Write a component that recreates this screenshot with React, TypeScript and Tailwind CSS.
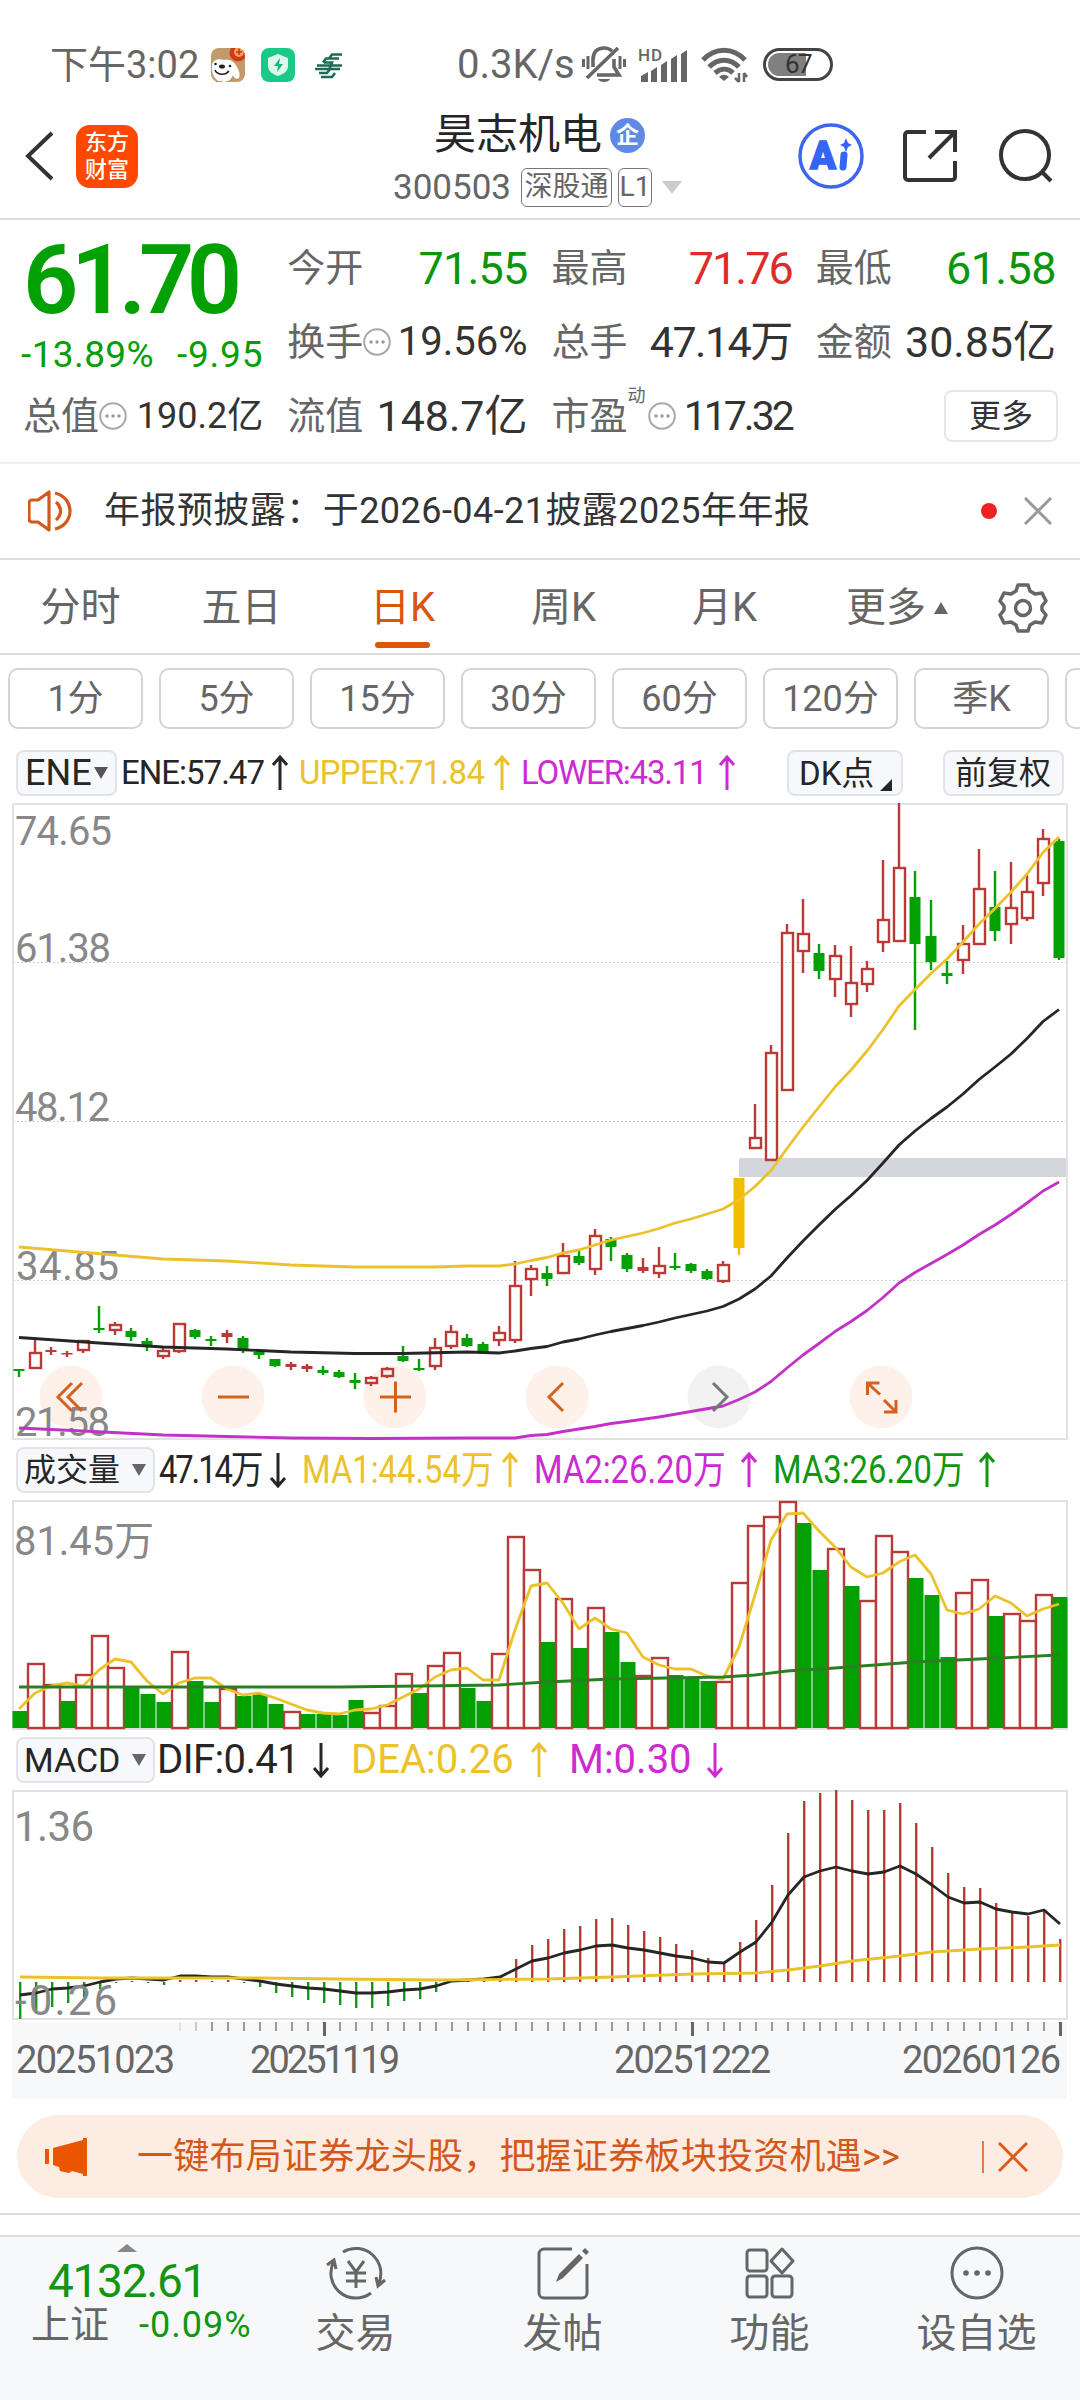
const RED = '#b93a36';
const GREEN = '#03a003';
const YELLOW = '#ecc22c';
const PURPLE = '#c232c8';
const BLACK = '#262626';

// [kind, high, bodyTop, bodyBottom, low] in chart pixels
const candles: [string, number, number, number, number][] = [
  ['g', 566, 566, 568, 574], ['r', 536, 550, 565, 566], ['r', 544, 547, 549, 552], ['r', 548, 550, 551, 554],
  ['r', 537, 538, 547, 550], ['g', 503, 525, 527, 530], ['r', 519, 522, 527, 532], ['g', 525, 528, 534, 538],
  ['g', 535, 538, 543, 548], ['r', 545, 548, 553, 556], ['r', 521, 521, 548, 550], ['g', 526, 527, 534, 536],
  ['g', 533, 536, 538, 543], ['r', 527, 530, 534, 540], ['g', 533, 535, 546, 550], ['g', 547, 549, 552, 556],
  ['g', 556, 556, 563, 564], ['r', 559, 561, 564, 567], ['r', 561, 563, 566, 569], ['g', 563, 567, 570, 572],
  ['g', 567, 569, 574, 575], ['g', 570, 577, 580, 586], ['r', 573, 575, 580, 583], ['r', 564, 566, 573, 575],
  ['g', 543, 553, 558, 559], ['g', 556, 565, 567, 568], ['r', 535, 545, 563, 567], ['r', 522, 529, 543, 546],
  ['g', 531, 535, 543, 544], ['g', 539, 541, 549, 550], ['r', 523, 530, 537, 543], ['r', 458, 483, 537, 540],
  ['r', 462, 466, 476, 493], ['g', 463, 470, 476, 483], ['r', 440, 453, 470, 470], ['g', 448, 453, 460, 462],
  ['r', 426, 433, 466, 472], ['g', 434, 436, 444, 458], ['g', 450, 452, 466, 469], ['r', 455, 464, 468, 470],
  ['r', 444, 463, 470, 475], ['g', 450, 463, 465, 467], ['g', 460, 461, 468, 470], ['g', 466, 468, 476, 477],
  ['r', 458, 462, 478, 480], ['y', 375, 375, 445, 452], ['r', 301, 335, 345, 346], ['r', 242, 250, 357, 357],
  ['r', 121, 130, 287, 287], ['r', 96, 131, 148, 170], ['g', 141, 150, 168, 176], ['r', 142, 153, 176, 194],
  ['r', 143, 180, 201, 214], ['r', 158, 166, 181, 189], ['r', 57, 117, 139, 149], ['r', 0, 65, 138, 138],
  ['g', 68, 94, 141, 227], ['g', 97, 133, 159, 167], ['g', 158, 170, 173, 181], ['r', 122, 141, 157, 171],
  ['r', 46, 86, 141, 141], ['g', 68, 104, 128, 138], ['r', 59, 105, 121, 141], ['r', 72, 89, 115, 118],
  ['r', 26, 36, 80, 93], ['g', 36, 38, 155, 157],
];

// [index, y]
const upper: number[][] = [
  [0, 444], [3, 448], [6, 452], [9, 456], [13, 458], [17, 462], [21, 464], [26, 464], [28, 463], [30, 463], [31, 461],
  [32, 457.5], [33, 454.5], [34, 450], [35, 447], [36, 442], [37, 437], [38, 433.5], [39, 430], [40, 425.5], [41, 420],
  [42, 416], [43, 411], [44, 406], [45, 396.5], [46, 383.5], [47, 367.5], [48, 345.5], [49, 324], [50, 304], [51, 284],
  [52, 267], [53, 248], [54, 226.5], [55, 203], [56, 186.5], [57, 170.5], [58, 156], [59, 139], [60, 121], [61, 105.5],
  [62, 89], [63, 71], [64, 49.5], [65, 34],
];
const middle: number[][] = [
  [0, 534.5], [5, 540], [9, 544], [13, 546], [17, 549], [21, 550.5], [24, 550.5], [28, 549], [30, 550], [31, 548],
  [32, 545.5], [33, 543.5], [34, 539], [35, 536], [36, 532], [37, 528.5], [38, 525.5], [39, 522.5], [40, 519], [41, 515],
  [42, 511.5], [43, 508], [44, 503.5], [45, 496], [46, 486], [47, 473], [48, 455], [49, 438], [50, 422], [51, 406.5],
  [52, 392.5], [53, 377.5], [54, 360], [55, 342], [56, 328], [57, 315.5], [58, 304], [59, 291], [60, 276.5], [61, 264],
  [62, 251], [63, 235.5], [64, 218.5], [65, 206.5],
];
const lower: number[][] = [
  [0, 625], [4, 628], [9, 632], [13, 633.5], [17, 635], [22, 635.5], [28, 635], [31, 635], [32, 632.5], [33, 631.5],
  [34, 628.5], [35, 626], [36, 623.5], [37, 620.5], [38, 618.5], [40, 614], [42, 608.5], [44, 603], [45, 596.5],
  [46, 589], [47, 578.5], [48, 565], [49, 552], [50, 540.5], [51, 528.5], [52, 518.5], [53, 507.5], [54, 494.5],
  [55, 480], [56, 469.5], [57, 460.5], [58, 451.5], [59, 442], [60, 431.5], [61, 422], [62, 411.5], [63, 400], [64, 388],
  [65, 379],
];

const volumes: [string, number][] = [
  ['g', 211], ['r', 163], ['r', 184], ['g', 201], ['r', 174], ['r', 135], ['r', 167], ['g', 186], ['g', 194], ['g', 202],
  ['r', 151], ['g', 181], ['g', 202], ['r', 188], ['g', 196], ['g', 194], ['g', 204], ['r', 211], ['g', 214], ['g', 214],
  ['g', 215], ['g', 200], ['r', 212], ['r', 205], ['r', 173], ['g', 193], ['r', 165], ['r', 152], ['g', 188], ['g', 201],
  ['r', 153], ['r', 36], ['r', 69], ['g', 142], ['r', 98], ['g', 148], ['r', 107], ['g', 132], ['g', 162], ['r', 175],
  ['r', 157], ['g', 175], ['g', 177], ['g', 181], ['r', 181], ['r', 82], ['r', 25], ['r', 16], ['r', 1], ['g', 23],
  ['g', 70], ['r', 48], ['g', 86], ['r', 100], ['r', 35], ['r', 51], ['g', 78], ['g', 95], ['g', 157], ['r', 92],
  ['r', 79], ['g', 116], ['r', 113], ['r', 120], ['r', 94], ['g', 97],
];
const volMa1 = [
  209, 193, 186, 183, 186, 170, 159, 162, 181, 194, 183, 178, 178, 189, 195, 193, 198, 204, 210, 213, 214, 210, 209, 205,
  197, 189, 177, 170, 168, 180, 180, 130, 86, 83, 103, 129, 118, 129, 133, 157, 165, 169, 169, 176, 179, 147, 95, 40, 14,
  13, 31, 47, 67, 77, 73, 62, 55, 74, 110, 114, 109, 96, 103, 116, 109, 104,
];
const volMa3: number[][] = [
  [0, 187], [20, 187], [25, 186], [30, 185], [33, 182], [37, 179], [44, 177], [46, 175], [48, 171], [51, 168], [56, 162],
  [60, 159], [65, 155],
];

const macd = [
  229, 223, 217, 213, 207, 199, 193, 191, 193, 195, 190, 190, 191, 190, 193, 197, 203, 207, 210, 213, 215, 218, 218, 216,
  211, 209, 202, 192, 190, 190, 186, 169, 155, 149, 139, 136, 129, 128, 135, 141, 147, 154, 160, 168, 172, 152, 130, 95,
  43, 11, 3, 0, 10, 20, 20, 13, 33, 57, 83, 97, 98, 113, 121, 126, 121, 149,
];
const dif = [
  205, 203, 199, 198, 196, 192, 189, 188, 189, 190, 186, 186, 187, 187, 189, 191, 194, 196, 198, 199, 201, 203, 203, 202,
  200, 199, 196, 191, 190, 189, 187, 179, 171, 168, 163, 160, 156, 155, 158, 160, 163, 166, 168, 172, 173, 162, 152, 132,
  105, 87, 81, 77, 81, 84, 82, 76, 84, 95, 107, 113, 112, 119, 122, 124, 120, 134,
];
const dea: number[][] = [
  [0, 187], [5, 188], [15, 188], [20, 189], [26, 190], [33, 189], [37, 187], [42, 184], [46, 183], [48, 180], [50, 176],
  [52, 171], [55, 166], [57, 162], [60, 159], [63, 157], [65, 155],
];

// x inside a chart svg, whose left edge is the frame
const cx = (i: number) => 7 + i * 16;
const line = (pts: number[][], dx = 0) => pts.map(([i, y]) => `${cx(i) + dx},${y}`).join(' ');
const series = (ys: number[]) => ys.map((y, i) => [i, y]);

function Arrow({ down = false }: { down?: boolean }) {
  return (
    <svg width="18" height="36" viewBox="0 0 18 36" fill="none" stroke="currentColor" strokeWidth="3" className="shrink-0">
      {down ? <path d="M9 1v33M2 26l7 8 7-8" /> : <path d="M9 35V2M2 10l7-8 7 8" />}
    </svg>
  );
}

function Dots() {
  return (
    <svg width="28" height="28" viewBox="0 0 28 28" className="shrink-0">
      <circle cx="14" cy="14" r="12.8" fill="none" stroke="#a8a8a8" strokeWidth="2" />
      <circle cx="8" cy="14" r="1.7" fill="#999" />
      <circle cx="14" cy="14" r="1.7" fill="#999" />
      <circle cx="20" cy="14" r="1.7" fill="#999" />
    </svg>
  );
}

function Down({ className }: { className: string }) {
  return (
    <svg width="14" height="12" viewBox="0 0 14 12" className={className}>
      <path d="M0 0h14L7 12z" fill="currentColor" />
    </svg>
  );
}

function StatusBar() {
  return (
    <div className="flex h-[110px] items-center pl-[50px] pt-[19px] text-[#666]">
      <div className="w-[161px] text-[38px] leading-none whitespace-nowrap">下午3:02</div>
      <svg width="34" height="34" viewBox="0 0 34 34" className="shrink-0">
        <clipPath id="dog"><rect width="34" height="34" rx="8" /></clipPath>
        <g clipPath="url(#dog)">
          <rect width="34" height="34" fill="#c39a6b" />
          <circle cx="27" cy="5" r="8.5" fill="#cf3a1c" />
          <circle cx="28" cy="4" r="5" fill="#f0a64e" />
          <path d="M25 4h6M28 1v6" stroke="#c9341a" strokeWidth="1.6" />
          <path d="M1 18c0-6 6-8 12-6 3-1 9 0 11 4 3 4 6 10 4 14-3 2-5 0-6-3-2 5-5 7-11 7C5 34 0 26 1 18z" fill="#fff" />
          <path d="M4 22c2 5 10 6 14 1" stroke="#222" strokeWidth="1.6" fill="none" />
          <ellipse cx="11" cy="18.500" rx="3" ry="2" fill="#222" />
          <circle cx="4.500" cy="16" r="1.300" fill="#222" />
          <circle cx="19" cy="18" r="1.300" fill="#222" />
          <path d="M5 33c2 1 4 1 6 0v3H5z" fill="#cf3a1c" />
        </g>
      </svg>
      <svg width="34" height="34" viewBox="0 0 34 34" className="ml-4 shrink-0">
        <rect width="34" height="34" rx="8" fill="#19ca86" />
        <path d="M17 6l10 4v8c0 5-4 8-10 10-6-2-10-5-10-10v-8z" fill="#dff8ee" />
        <path d="M19 10l-6 8h4l-1 6 6-8h-4z" fill="#14b877" />
      </svg>
      <svg width="34" height="34" viewBox="0 0 34 34" className="ml-4 shrink-0" fill="none" stroke="#1c6b55" strokeWidth="2.600">
        <path d="M31 6.500H21l-3 4h10M26 10.500H15l-3 4M31 17.500H6M4 21h13M29 21H19l-3 4H8M24 25l-3 4H10M13 14.500h8l-3 7" />
      </svg>
      <div className="ml-[112px] w-[125px] text-[40px] leading-none">0.3K/s</div>
      <svg width="44" height="40" viewBox="0 0 44 40" fill="none" stroke="#666" strokeWidth="3.600" className="shrink-0">
        <path d="M11 22V15c0-8 4-12 11-12 4 0 6 1 8 3M32 14v8l5 8H15M5 33L36 3" />
        <path d="M1.500 14v8M6 11v13M38 11v13M42.500 14v8" strokeWidth="3" />
        <path d="M16 34h12c-1 4-11 4-12 0z" fill="#666" stroke="none" />
      </svg>
      <svg width="51" height="40" viewBox="0 0 51 40" className="ml-3 shrink-0" fill="#666">
        <text x="0" y="16" className="text-[17px] font-medium" textLength="24">HD</text>
        <path d="M3 31l7-4v10H3zM13 26l6-4v15h-6zM23 20l6-4v21h-6zM33 14l6-4v27h-6zM43 9l6-4v32h-6z" />
      </svg>
      <svg width="48" height="36" viewBox="0 0 48 36" fill="none" stroke="#666" strokeWidth="5" className="ml-3 shrink-0">
        <path d="M2 13C14 0 32 0 44 13M8 20c9-9 21-9 30 0M14 26c6-5 13-5 18 0" />
        <path d="M18 30c3-3 7-3 10 0l-5 4z" fill="#666" stroke="none" />
        <path d="M38 26v9M43 35v-9M38 35l-4-4M43 26l3 4" strokeWidth="2.500" />
      </svg>
      <div className="relative ml-3.5 h-[33px] w-[70px] rounded-full border-[3px] border-[#444] p-0.5">
        <div className="h-full w-[38px] rounded-l-full bg-[#808080]" />
        <div className="absolute inset-0 text-center text-[26px] leading-[27px] tracking-[-1.5px] text-[#333]">67</div>
      </div>
    </div>
  );
}

function Header() {
  return (
    <div className="flex h-[110px] items-center border-b-2 border-[#ddd] pb-4">
      <svg width="30" height="52" viewBox="0 0 30 52" fill="none" stroke="#333" strokeWidth="4" className="ml-6 shrink-0">
        <path d="M28 3L4 26l24 23" />
      </svg>
      <div className="ml-[22px] flex h-[63px] w-[62px] flex-col items-center justify-center rounded-[14px] bg-[#ff4800] text-[22px] leading-[27px] font-medium text-white">
        <div>东方</div>
        <div>财富</div>
      </div>
      <div className="mt-2 ml-[255px] w-[300px] shrink-0">
        <div className="flex h-[50px] items-center pl-[41px]">
          <span className="text-[42px] leading-none text-[#262626]">昊志机电</span>
          <span className="ml-2 flex h-[35px] w-[35px] items-center justify-center rounded-full bg-[#5e8ae6] text-[23px] leading-none font-bold text-white">企</span>
        </div>
        <div className="mt-1 flex h-[46px] items-center text-[#666]">
          <span className="w-[128px] text-[35px] leading-none">300503</span>
          <span className="flex h-[39px] w-[91px] items-center justify-center rounded-md border border-[#777] text-[28px] leading-none">深股通</span>
          <span className="ml-1.5 flex h-[39px] w-[34px] items-center justify-center rounded-md border border-[#777] text-[28px] leading-none">L1</span>
          <svg width="20" height="13" viewBox="0 0 20 13" className="ml-2.5"><path d="M0 0h20L10 13z" fill="#ccc" /></svg>
        </div>
      </div>
      <svg width="66" height="66" viewBox="0 0 66 66" className="ml-[105px] shrink-0">
        <circle cx="33" cy="33" r="31" fill="none" stroke="#3c66ee" strokeWidth="3.500" />
        <text x="12" y="46" fill="#3565f5" stroke="#3565f5" strokeWidth="1.500" className="text-[38px] font-black">A</text>
        <path d="M46 32l-1 12" stroke="#3565f5" strokeWidth="7" strokeLinecap="round" />
        <path d="M48 15l2 5 4 2-4 2-2 5-2-5-4-2 4-2z" fill="#3565f5" />
      </svg>
      <svg width="54" height="54" viewBox="0 0 54 54" fill="none" stroke="#333" strokeWidth="4" className="ml-[39px] shrink-0">
        <path d="M23 3H5a3 3 0 0 0-3 3v42a3 3 0 0 0 3 3h44a3 3 0 0 0 3-3V32M32 3h20v20M51 4L26 29" />
      </svg>
      <svg width="56" height="56" viewBox="0 0 56 56" fill="none" stroke="#333" strokeWidth="4" className="ml-[41px] shrink-0">
        <circle cx="27" cy="27" r="24" />
        <path d="M43 43l10 10" />
      </svg>
    </div>
  );
}

function Quote() {
  const cell = 'flex items-center justify-between whitespace-nowrap leading-none text-[#333]';
  const label = 'text-[38px] text-[#666]';
  return (
    <div className="grid h-[244px] grid-cols-4 grid-rows-[74px_74px_74px] gap-x-6 border-b-2 border-[#eee] pr-6 pl-[23px] pt-[11px]">
      <div className="row-span-2 text-[#03a003]">
        <div className="h-[86px] text-[97px] leading-[98px] font-semibold tracking-[-7.5px]">61.70</div>
        <div className="mt-[18px] -ml-0.5 flex justify-between text-[37px] leading-[40px] tracking-[0.4px]">
          <span>-13.89%</span>
          <span className="tracking-[0.8px]">-9.95</span>
        </div>
      </div>
      <div className={cell}><span className={label}>今开</span><span className="text-[45px] tracking-[-0.8px] text-[#0a960a]">71.55</span></div>
      <div className={cell}><span className={label}>最高</span><span className="text-[45px] tracking-[-2px] text-[#dd2c2c]">71.76</span></div>
      <div className={cell}><span className={label}>最低</span><span className="text-[45px] tracking-[-0.6px] text-[#0a960a]">61.58</span></div>
      <div className={cell}><span className="flex items-center"><span className={label}>换手</span><Dots /></span><span className="text-[40px]">19.56%</span></div>
      <div className={cell}><span className={label}>总手</span><span className="text-[43px] tracking-[-1.5px]">47.14万</span></div>
      <div className={cell}><span className={label}>金额</span><span className="text-[43px]">30.85亿</span></div>
      <div className={cell}><span className="flex items-center"><span className={label}>总值</span><Dots /></span><span className="text-[36px]">190.2亿</span></div>
      <div className={cell}><span className={label}>流值</span><span className="text-[43px]">148.7亿</span></div>
      <div className={cell}>
        <span className="flex items-center">
          <span className={label}>市盈</span>
          <span className="mb-10 w-5 text-[18px] text-[#666]">动</span>
          <Dots />
        </span>
        <span className="text-[41px] tracking-[-3px]">117.32</span>
      </div>
      <div className="flex items-center justify-end">
        <div className="-mr-0.5 flex h-[52px] w-[114px] items-center justify-center rounded-lg border-2 border-[#e6e6e6] text-[32px] leading-none text-[#333]">更多</div>
      </div>
    </div>
  );
}

function Notice() {
  return (
    <div className="flex h-24 items-center border-b-2 border-[#ddd] pl-7 leading-none">
      <svg width="48" height="42" viewBox="0 0 48 42" fill="none" stroke="#d4581a" strokeWidth="3.200" className="shrink-0">
        <path d="M21 2v38L10 32H4a3 3 0 0 1-3-3V13a3 3 0 0 1 3-3h6z" strokeLinejoin="round" />
        <path d="M28 12c6 5 6 13 0 18M27 3c20 5 20 31 0 36" />
      </svg>
      <div className="ml-7 w-[877px] text-[36px] tracking-[0.45px] whitespace-nowrap text-[#333]">年报预披露：于2026-04-21披露2025年年报</div>
      <div className="h-4 w-4 shrink-0 rounded-full bg-[#ee2222]" />
      <svg width="28" height="28" viewBox="0 0 28 28" stroke="#999" strokeWidth="3" className="ml-[27px] shrink-0"><path d="M1 1l26 26M27 1L1 27" /></svg>
    </div>
  );
}

function Tabs() {
  return (
    <div className="flex h-[95px] items-center border-b-2 border-[#ddd] pt-0.5 text-[40px] leading-none text-[#666]">
      {['分时', '五日', '日K', '周K', '月K'].map((t) => (
        <div key={t} className={t === '日K' ? 'relative w-[161px] text-center text-[#d9560f]' : 'w-[161px] text-center'}>
          {t}
          {t === '日K' && <div className="absolute -bottom-5 left-[53px] h-1.5 w-[55px] rounded-full bg-[#d9560f]" />}
        </div>
      ))}
      <div className="flex w-[185px] items-center pl-[41px]">
        更多
        <svg width="14" height="12" viewBox="0 0 14 12" className="ml-2"><path d="M0 12h14L7 0z" fill="#666" /></svg>
      </div>
      <svg width="50" height="50" viewBox="0 0 50 50" fill="none" stroke="#666" strokeWidth="3.500" strokeLinejoin="round" className="ml-[8px]">
        <path d="M20 2h10l2 6 5 3 7-1 4 8-4 5v4l4 5-4 8-7-1-5 3-2 6H20l-2-6-5-3-7 1-4-8 4-5v-4l-4-5 4-8 7 1 5-3z" />
        <circle cx="25" cy="25" r="7.500" />
      </svg>
    </div>
  );
}

function Periods() {
  return (
    <div className="flex h-[95px] gap-4 overflow-hidden pt-[13px] pl-2">
      {['1分', '5分', '15分', '30分', '60分', '120分', '季K', ''].map((p) => (
        <div key={p} className="flex h-[61px] w-[135px] shrink-0 items-center justify-center rounded-[10px] border-2 border-[#d4d4d4] text-[36px] leading-none text-[#666]">{p}</div>
      ))}
    </div>
  );
}

function Legend() {
  const box = 'flex h-[46px] shrink-0 items-center rounded-lg border-2 border-[#e0e3e8] bg-[#f7f8fb] leading-none text-[#262626]';
  return (
    <div className="flex h-[53px] items-start pl-4 text-[33px] leading-[46px] whitespace-nowrap">
      <div className={`${box} w-[101px] pl-[7px] text-[36px]`}>ENE<Down className="ml-0.5 text-[#555]" /></div>
      <div className="flex w-[180px] items-center pl-1 tracking-[-1px] text-[#262626]"><span className="w-[150px]">ENE:57.47</span><Arrow /></div>
      <div className="flex w-[222px] items-center pl-0.5 tracking-[-0.7px] text-[#ecc22c]"><span className="w-[194px]">UPPER:71.84</span><Arrow /></div>
      <div className="flex w-[268px] items-center pl-0.5 tracking-[-1.2px] text-[#cc2bd2]"><span className="w-[197px]">LOWER:43.11</span><Arrow /></div>
      <div className={`${box} w-[116px] pl-2.5`}>DK点<svg width="12" height="12" className="mt-6 ml-1.5"><path d="M12 0v12H0z" fill="#262626" /></svg></div>
      <div className={`${box} ml-10 w-[121px] pl-2.5 text-[32px]`}>前复权</div>
    </div>
  );
}

function KLine() {
  return (
    <svg width="1056" height="637" viewBox="0 0 1056 637" className="ml-3 block">
      {[71, 233, 395, 557, 719, 881].map((x) => (
        <circle key={x} cx={x - 12} cy="594" r="31.500" fill={x === 719 ? '#f2f2f2' : '#fef1e9'} />
      ))}
      <rect x="727" y="355" width="328" height="19" fill="#d3d7dc" />
      {[159, 318, 477].map((y) => (
        <path key={y} d={`M1 ${y + 0.5}H1055`} stroke="#cfcfcf" strokeDasharray="2 2" />
      ))}
      <rect x="1" y="1" width="1054" height="635" fill="none" stroke="#e2e2e2" strokeWidth="2" />
      <g className="text-[40px]" fill="#888">
        <text x="3" y="42" textLength="97">74.65</text>
        <text x="3" y="159" textLength="96">61.38</text>
        <text x="3" y="318" textLength="95">48.12</text>
        <text x="4" y="477" textLength="103">34.85</text>
        <text x="3" y="633" textLength="95">21.58</text>
      </g>
      {candles.map(([k, h, t, b, l], i) => {
        const color = k === 'g' ? GREEN : k === 'y' ? '#f5bb00' : RED;
        const hollow = k === 'r' && b - t > 4;
        return (
          <g key={i} stroke={color} strokeWidth="2.400">
            <path d={`M${cx(i)} ${h}V${t}M${cx(i)} ${b}V${l}`} />
            {hollow ? (
              <rect x={cx(i) - 5} y={t} width="11" height={b - t} fill="none" />
            ) : (
              <rect x={cx(i) - 5.5} y={t} width="11" height={Math.max(b - t, 1.5)} fill={color} stroke="none" />
            )}
          </g>
        );
      })}
      <g fill="none" strokeWidth="2.800" strokeLinejoin="round">
        <polyline points={line(upper)} stroke={YELLOW} />
        <polyline points={line(middle)} stroke={BLACK} />
        <polyline points={line(lower)} stroke={PURPLE} />
      </g>
      <g fill="none" stroke="#d4621f" strokeWidth="3">
        <path d="M60 580L46 594l14 14M70 580l-14 14 14 14" />
        <path d="M206 594h31M368 594h31M383.500 578.500v31" />
        <path d="M551 580l-14 14 14 14" />
        <path d="M701 580l14 14-14 14" stroke="#777" />
        <path d="M855.500 592v-12h12M856 580.500l12 11M884 597v12h-12M884 609l-12-12" />
      </g>
    </svg>
  );
}

function VolumeLegend() {
  const value = 'origin-left scale-x-[0.84]';
  return (
    <div className="flex h-[60px] items-center pl-4 text-[39px] leading-none whitespace-nowrap">
      <div className="flex h-[46px] w-[139px] items-center rounded-lg border-2 border-[#e0e3e8] bg-[#f7f8fb] pl-1.5 text-[32px] text-[#262626]">
        成交量<Down className="ml-3 text-[#666]" />
      </div>
      <div className="flex w-[147px] items-center pl-1 tracking-[-2.5px] text-[#262626]"><span className={`${value} w-[110px]`}>47.14万</span><Arrow down /></div>
      <div className="flex w-[232px] items-center text-[#ecc22c]"><span className={`${value} w-[199px]`}>MA1:44.54万</span><Arrow /></div>
      <div className="flex w-[239px] items-center text-[#cc2bd2]"><span className={`${value} w-[206px]`}>MA2:26.20万</span><Arrow /></div>
      <div className="flex items-center text-[#129612]"><span className={`${value} w-[205px]`}>MA3:26.20万</span><Arrow /></div>
    </div>
  );
}

function Volume() {
  return (
    <svg width="1056" height="230" viewBox="0 0 1056 230" className="ml-3 block">
      <rect x="1" y="1" width="1054" height="228" fill="none" stroke="#e2e2e2" strokeWidth="2" />
      <text x="2" y="55" fill="#888" className="text-[40px]" textLength="140" lengthAdjust="spacingAndGlyphs">81.45万</text>
      {volumes.map(([k, y], i) =>
        k === 'g' ? (
          <rect key={i} x={cx(i) - 6.5} y={y} width="15" height={228 - y} fill={GREEN} />
        ) : (
          <rect key={i} x={cx(i) - 7} y={y + 1} width="16" height={227 - y} fill="#fff" stroke={RED} strokeWidth="2.400" />
        )
      )}
      <g fill="none" strokeWidth="2.800" strokeLinejoin="round">
        <polyline points={line(series(volMa1))} stroke={YELLOW} />
        <polyline points={line(volMa3)} stroke="#2a8020" />
      </g>
    </svg>
  );
}

function MacdLegend() {
  return (
    <div className="flex h-[60px] items-center pl-4 text-[40px] leading-none whitespace-nowrap">
      <div className="flex h-[46px] w-[139px] items-center rounded-lg border-2 border-[#e0e3e8] bg-[#f7f8fb] pl-1.5 text-[34px] text-[#262626]">
        <span className="w-[96px]">MACD</span><Down className="ml-3 text-[#666]" />
      </div>
      <div className="flex w-[196px] items-center pl-0.5 tracking-[-0.6px] text-[#262626]"><span className="w-[155px]">DIF:0.41</span><Arrow down /></div>
      <div className="flex w-[218px] items-center text-[#ecc22c]"><span className="w-[179px]">DEA:0.26</span><Arrow /></div>
      <div className="flex items-center text-[#cc2bd2]"><span className="w-[137px]">M:0.30</span><Arrow down /></div>
    </div>
  );
}

function Macd() {
  return (
    <svg width="1056" height="310" viewBox="0 0 1056 310" className="ml-3 block">
      <rect x="1" y="1" width="1054" height="228" fill="none" stroke="#e2e2e2" strokeWidth="2" />
      {macd.map((y, i) => (
        <rect key={i} x={cx(i)} y={Math.min(y, 192)} width="2.400" height={Math.abs(192 - y)} fill={y > 192 ? '#1a951a' : RED} />
      ))}
      <g fill="none" strokeWidth="2.800" strokeLinejoin="round">
        <polyline points={line(series(dif), 1)} stroke={BLACK} />
        <polyline points={line(dea, 1)} stroke={YELLOW} />
      </g>
      <g className="text-[42px]" fill="#888">
        <text x="2" y="51" textLength="80">1.36</text>
        <text x="3" y="225" textLength="102">-0.26</text>
      </g>
      {/* time axis */}
      <rect y="232" width="1055" height="77" fill="#f7f8fa" />
      {Array.from({ length: 56 }, (_, n) => n + 10).map((i) => {
        const major = i === 19 || i === 42 || i === 65;
        return <rect key={i} x={cx(i)} y="232" width={major ? 3 : 2} height={major ? 14 : 9} fill={major ? '#666' : '#999'} opacity={i === 10 ? 0.2 : i === 11 ? 0.5 : 1} />;
      })}
      <g className="text-[38px]" fill="#666">
        <text x="4" y="283" textLength="159">20251023</text>
        <text x="238" y="283" textLength="150">20251119</text>
        <text x="602" y="283" textLength="157">20251222</text>
        <text x="890" y="283" textLength="159">20260126</text>
      </g>
    </svg>
  );
}

function Banner() {
  return (
    <div className="mx-[17px] mt-[15px] flex h-[83px] shrink-0 items-center rounded-full bg-[#fdece2] pl-7 leading-none">
      <svg width="42" height="38" viewBox="0 0 42 38" fill="#ec5500">
        <path d="M0 11h4v15H0zM8 10L38 2V0h4v38h-4v-2l-11-3-3 2-9-2-1-4-6-2z" />
      </svg>
      <div className="ml-[50px] w-[845px] text-[36px] tracking-[0.25px] whitespace-nowrap text-[#d4581a]">一键布局证券龙头股，把握证券板块投资机遇&gt;&gt;</div>
      <div className="h-8 w-0.5 bg-[#dd7d4a]" />
      <svg width="30" height="30" viewBox="0 0 30 30" stroke="#dd5a1c" strokeWidth="3" className="ml-[14px]"><path d="M1 1l28 28M29 1L1 29" /></svg>
    </div>
  );
}

function BottomBar() {
  const item = 'flex flex-1 flex-col items-center gap-3 pt-[9px]';
  return (
    <div className="flex h-[165px] border-t-2 border-[#ddd] bg-[#f6f8fa] text-[40px] leading-[44px] text-[#666]">
      <div className="w-[252px] pt-[7px]">
        <svg width="20" height="8" viewBox="0 0 20 8" className="ml-[117px] block"><path d="M0 8h20L10 0z" fill="#888" /></svg>
        <div className="mt-[7px] pl-12 text-[46px] tracking-[-1.3px] text-[#129612]">4132.61</div>
        <div className="flex items-center pl-[31px] text-[39px] whitespace-nowrap">
          上证<span className="ml-[30px] text-[36px] tracking-[1px] text-[#129612]">-0.09%</span>
        </div>
      </div>
      <div className={item}>
        <svg width="60" height="54" viewBox="0 0 60 54" fill="none" stroke="#666" strokeWidth="3">
          <path d="M17 6a25 25 0 0 1 35 33M45 47A25 25 0 0 1 8 15M1 19l7-5 2 9M59 34l-7 6-2-9" />
          <path d="M22 15l8 11 8-11M20 27h20M20 35h20M30 26v16" />
        </svg>
        交易
      </div>
      <div className={item}>
        <svg width="54" height="54" viewBox="0 0 54 54" fill="none" stroke="#666" strokeWidth="3">
          <path d="M36 3H8a5 5 0 0 0-5 5v39a5 5 0 0 0 5 5h38a5 5 0 0 0 5-5V18" />
          <path d="M20 36l3-8L43 8l4 4-20 20zM46 5l3-3 4 4-3 3z" fill="#666" stroke="none" />
        </svg>
        发帖
      </div>
      <div className={item}>
        <svg width="52" height="54" viewBox="0 0 52 54" fill="none" stroke="#666" strokeWidth="3">
          <rect x="3" y="4" width="20" height="21" rx="3" />
          <rect x="3" y="30" width="20" height="21" rx="3" />
          <rect x="28" y="30" width="20" height="21" rx="3" />
          <path d="M38 3l11 12-11 12-11-12z" strokeLinejoin="round" />
        </svg>
        功能
      </div>
      <div className={item}>
        <svg width="54" height="54" viewBox="0 0 54 54">
          <circle cx="27" cy="27" r="25" fill="none" stroke="#666" strokeWidth="3" />
          <g fill="#666"><circle cx="16" cy="27" r="2.800" /><circle cx="27" cy="27" r="2.800" /><circle cx="38" cy="27" r="2.800" /></g>
        </svg>
        设自选
      </div>
    </div>
  );
}

export default function App() {
  return (
    <div className="flex h-[2400px] w-[1080px] flex-col overflow-hidden bg-white font-[Roboto,'Noto_Sans_CJK_SC',sans-serif]">
      <StatusBar />
      <Header />
      <Quote />
      <Notice />
      <Tabs />
      <Periods />
      <Legend />
      <KLine />
      <VolumeLegend />
      <Volume />
      <MacdLegend />
      <Macd />
      <Banner />
      <div className="mt-[15px] h-[22px] shrink-0 border-t-2 border-[#ddd]" />
      <BottomBar />
    </div>
  );
}
